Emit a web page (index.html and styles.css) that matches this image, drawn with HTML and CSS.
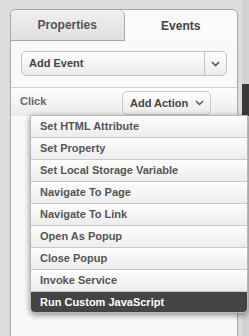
FILE: index.html
```html
<!DOCTYPE html>
<html lang="en">
<head>
    <meta charset="UTF-8">
    <meta name="viewport" content="width=device-width, initial-scale=1.0">
    <title>Events</title>
    <link rel="stylesheet" href="styles.css">
</head>
<body>
    <div class="edge"></div>
    <div class="edge-dark"></div>

    <div class="panel">
        <div class="tabs">
            <div class="tab">Properties</div>
            <div class="tab active">Events</div>
        </div>

        <div class="select">
            <span class="select-label">Add Event</span>
            <span class="select-arrow">
                <svg width="9" height="6" viewBox="0 0 9 6"><path d="M1 1 L4.5 4.5 L8 1" fill="none" stroke="#555" stroke-width="1.6"/></svg>
            </span>
        </div>

        <div class="event-row">
            <span class="event-name">Click</span>
            <button class="btn-action">Add Action
                <svg width="9" height="6" viewBox="0 0 9 6"><path d="M1 1 L4.5 4.5 L8 1" fill="none" stroke="#555" stroke-width="1.4"/></svg>
            </button>
        </div>
    </div>

    <!-- menu do Add Action -->
    <ul class="menu">
        <li>Set HTML Attribute</li>
        <li>Set Property</li>
        <li>Set Local Storage Variable</li>
        <li>Navigate To Page</li>
        <li>Navigate To Link</li>
        <li>Open As Popup</li>
        <li>Close Popup</li>
        <li>Invoke Service</li>
        <li class="selected">Run Custom JavaScript</li>
    </ul>
</body>
</html>
```

FILE: styles.css
```css
body {
    font-family: "Liberation Sans", Arial, sans-serif;
    background-color: #dcdcdc;
    margin: 0;
    padding: 0;
    width: 249px;
    height: 336px;
    overflow: hidden;
    position: relative;
}
.edge {
    position: absolute;
    left: 242px;
    top: 0;
    width: 7px;
    height: 336px;
    background-color: #d2d2d2;
}
.edge-dark {
    position: absolute;
    left: 242px;
    top: 84px;
    width: 7px;
    height: 32px;
    background-color: #3a3a3a;
}
.panel {
    position: relative;
    margin: 9px 0 0 10px;
    width: 226px;
    height: 340px;
    border: 1px solid #a8a8a8;
    border-radius: 6px 6px 0 0;
    background-color: #f9f9f9;
}
.tabs {
    display: flex;
    height: 31px;
}
.tab {
    flex: 1;
    display: flex;
    align-items: center;
    justify-content: center;
    font-size: 12px;
    font-weight: bold;
    color: #555;
    background: linear-gradient(#f0f0f0, #e0e0e0);
    border-bottom: 1px solid #a8a8a8;
    border-right: 1px solid #a8a8a8;
    border-radius: 6px 6px 0 0;
}
.tab.active {
    background: #fafafa;
    color: #444;
    border: none;
}
.select {
    display: flex;
    height: 23px;
    margin: 10px 10px 0 10px;
    border: 1px solid #c4c4c4;
    border-radius: 5px;
    background: linear-gradient(#fdfdfd, #ececec);
}
.select-label {
    flex: 1;
    padding-left: 7px;
    font-size: 11px;
    font-weight: bold;
    color: #444;
    line-height: 23px;
}
.select-arrow {
    width: 21px;
    border-left: 1px solid #c4c4c4;
    display: flex;
    align-items: center;
    justify-content: center;
}
.event-row {
    display: flex;
    align-items: center;
    justify-content: space-between;
    margin-top: 11px;
    height: 28px;
    padding: 0 26px 0 9px;
    border-top: 1px solid #d4d4d4;
    background: linear-gradient(#fdfdfd, #ebebeb);
}
.event-name {
    font-size: 11px;
    font-weight: bold;
    color: #666;
    margin-top: -3px;
}
.btn-action {
    font-family: "Liberation Sans", Arial, sans-serif;
    font-size: 11px;
    font-weight: bold;
    color: #444;
    height: 24px;
    width: 89px;
    padding: 0 0 0 7px;
    text-align: left;
    border: 1px solid #c8c8c8;
    border-radius: 5px;
    background: linear-gradient(#fdfdfd, #ececec);
    display: flex;
    align-items: center;
    gap: 7px;
    margin-top: 2px;
}
.menu {
    position: absolute;
    left: 30px;
    top: 115px;
    width: 216px;
    margin: 0;
    padding: 0;
    list-style: none;
    border: 1px solid #b8b8b8;
    border-radius: 0 0 5px 5px;
    box-shadow: 0 2px 6px rgba(0, 0, 0, 0.45);
    overflow: hidden;
    background: #fff;
}
.menu li {
    height: 21px;
    line-height: 21px;
    padding-left: 9px;
    font-size: 11px;
    font-weight: bold;
    color: #555;
    background: linear-gradient(#fdfdfd, #ededed);
    border-bottom: 1px solid #c8c8c8;
}
.menu li.selected {
    background: #444;
    color: #fff;
    border-bottom: none;
    height: 20px;
    line-height: 20px;
}
```
